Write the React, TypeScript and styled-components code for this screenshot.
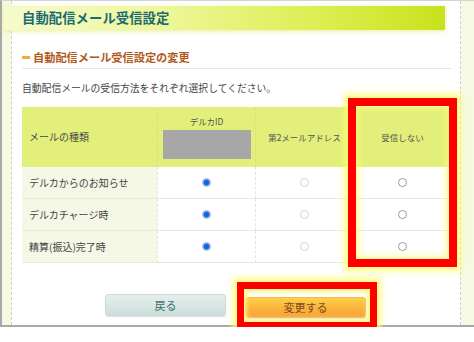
import React from "react";
import styled, { createGlobalStyle } from "styled-components";

const Global = createGlobalStyle`
  html, body { margin: 0; padding: 0; background: #ffffff; }
  body { font-family: "Noto Sans CJK JP", "Noto Sans", sans-serif; color: #444; }
  * { box-sizing: border-box; }
`;

const Frame = styled.div`
  width: 474px;
  height: 327px;
  background: #f7fae3;
  border-left: 2px solid #a9a9a9;
  border-top: 1px solid #d4d4d4;
  border-bottom: 2px solid #a9a9a9;
  display: flex;
`;

const Panel = styled.div`
  margin-left: 9px;
  width: 450px;
  height: 100%;
  background: #ffffff;
  border-left: 1px dashed #cfcfcf;
  border-right: 1px dashed #cfcfcf;
  display: flex;
  flex-direction: column;
`;

const TitleBar = styled.h1`
  margin: 5px 0 0 -8px;
  width: 441px;
  height: 24px;
  padding-left: 18px;
  background: linear-gradient(to right, #f5fbcc 0%, #eef79c 35%, #dcef55 70%, #c8e21c 100%);
  box-shadow: 0 1px 4px rgba(205, 225, 60, 0.55);
  color: #1c6a72;
  font-size: 13.3px;
  font-weight: 700;
  line-height: 24px;
  letter-spacing: 0.1px;
  white-space: nowrap;
`;

const Content = styled.div`
  padding: 0 9px 0 10px;
  display: flex;
  flex-direction: column;
  flex: 1;
`;

const SectionHeading = styled.h2`
  margin: 20px 0 0;
  padding-bottom: 4px;
  border-bottom: 1px solid #f3e4d2;
  display: flex;
  align-items: center;
  color: #b0581c;
  font-size: 11.2px;
  font-weight: 700;
  line-height: 14px;
  white-space: nowrap;
`;

const Bullet = styled.span`
  width: 8px;
  height: 3px;
  margin-right: 3px;
  background: #f6aa44;
`;

const Description = styled.p`
  margin: 12px 0 0;
  font-size: 9.8px;
  line-height: 14px;
  color: #454545;
  white-space: nowrap;
`;

const TableWrap = styled.div`
  position: relative;
  margin-top: 12px;
  width: 429px;
`;

const Grid = styled.div`
  display: grid;
  grid-template-columns: 135px 98px 98px 98px;
`;

const HeadCell = styled.div<{ $first?: boolean }>`
  height: 60px;
  background: #e2ef7b;
  display: flex;
  flex-direction: column;
  align-items: ${(p) => (p.$first ? "flex-start" : "center")};
  justify-content: center;
  padding-left: ${(p) => (p.$first ? "7px" : "0")};
  border-left: ${(p) => (p.$first ? "none" : "1px dashed #d6e27a")};
  color: ${(p) => (p.$first ? "#4a4a4a" : "#555")};
  font-size: ${(p) => (p.$first ? "10px" : "8.5px")};
  line-height: 12px;
  white-space: nowrap;
`;

const IdMask = styled.div`
  margin-top: 3px;
  width: 88px;
  height: 29px;
  background: #a7a7a7;
`;

const BodyCell = styled.div<{ $first?: boolean }>`
  height: 32px;
  display: flex;
  align-items: center;
  justify-content: ${(p) => (p.$first ? "flex-start" : "center")};
  padding-left: ${(p) => (p.$first ? "7px" : "0")};
  background: ${(p) => (p.$first ? "#f5f8e6" : "#ffffff")};
  border-bottom: 1px solid #e7eadc;
  border-left: ${(p) => (p.$first ? "none" : "1px dashed #e3e3e3")};
  font-size: 10px;
  color: #454545;
  white-space: nowrap;
`;

const Radio = styled.input.attrs({ type: "radio" })<{ $tone: "on" | "light" | "dark" }>`
  appearance: none;
  -webkit-appearance: none;
  margin: 0;
  width: 9px;
  height: 9px;
  border-radius: 50%;
  border: 1px solid
    ${(p) => (p.$tone === "on" ? "#8fb2e6" : p.$tone === "light" ? "#d3d3d3" : "#9c9c9c")};
  background: #ffffff;
  &:checked {
    background: radial-gradient(circle, #1663da 0, #1663da 2.4px, #4f8ce6 2.9px, #d9e6f8 3.6px);
  }
`;

const ColumnHighlight = styled.div`
  position: absolute;
  left: 326px;
  top: -9px;
  width: 109px;
  height: 169px;
  border: 8px solid #ff0000;
  pointer-events: none;
  box-shadow: 0 0 6px 4px rgba(255, 250, 110, 0.85), inset 0 0 6px 3px rgba(255, 250, 120, 0.75);
`;

const ButtonRow = styled.div`
  margin-top: 30px;
  display: flex;
  justify-content: center;
  align-items: flex-start;
  gap: 19px;
  padding-right: 2px;
`;

const Button = styled.button<{ $primary?: boolean }>`
  width: 121px;
  height: ${(p) => (p.$primary ? "21px" : "22px")};
  margin-top: ${(p) => (p.$primary ? "0" : "1px")};
  padding: 0;
  border-radius: 3px;
  border: 1px solid ${(p) => (p.$primary ? "#f3b84a" : "#cadbd8")};
  background: ${(p) =>
    p.$primary
      ? "linear-gradient(to bottom, #ffd04a 0%, #fbb23c 55%, #f8a23e 100%)"
      : "linear-gradient(to bottom, #e4efed 0%, #d6e6e3 60%, #cbdedb 100%)"};
  box-shadow: 0 1px 1px rgba(0, 0, 0, 0.12);
  color: ${(p) => (p.$primary ? "#7b4b22" : "#3f6f6d")};
  font-family: "Noto Sans CJK JP", sans-serif;
  font-size: 11px;
  line-height: 18px;
`;

const Highlighted = styled.div`
  position: relative;
  &::before {
    content: "";
    position: absolute;
    left: -8px;
    right: -11px;
    top: -11px;
    bottom: -10px;
    border: 7px solid #ff0000;
    border-bottom-width: 6px;
    pointer-events: none;
    box-shadow: 0 0 6px 4px rgba(255, 250, 110, 0.85), inset 0 0 4px 3px rgba(255, 245, 120, 0.9);
  }
`;

type Row = { label: string; name: string };
const rows: Row[] = [
  { label: "デルカからのお知らせ", name: "notice" },
  { label: "デルカチャージ時", name: "charge" },
  { label: "精算(振込)完了時", name: "settle" },
];

export default function App() {
  return (
    <>
      <Global />
      <Frame>
        <Panel>
          <TitleBar>自動配信メール受信設定</TitleBar>
          <Content>
            <SectionHeading>
              <Bullet />
              自動配信メール受信設定の変更
            </SectionHeading>
            <Description>自動配信メールの受信方法をそれぞれ選択してください。</Description>
            <TableWrap>
              <Grid>
                <HeadCell $first>メールの種類</HeadCell>
                <HeadCell>
                  デルカID
                  <IdMask />
                </HeadCell>
                <HeadCell>第2メールアドレス</HeadCell>
                <HeadCell>受信しない</HeadCell>
                {rows.map((r) => (
                  <React.Fragment key={r.name}>
                    <BodyCell $first>{r.label}</BodyCell>
                    <BodyCell>
                      <Radio $tone="on" name={r.name} defaultChecked />
                    </BodyCell>
                    <BodyCell>
                      <Radio $tone="light" name={r.name} />
                    </BodyCell>
                    <BodyCell>
                      <Radio $tone="dark" name={r.name} />
                    </BodyCell>
                  </React.Fragment>
                ))}
              </Grid>
              <ColumnHighlight />
            </TableWrap>
            <ButtonRow>
              <Button>戻る</Button>
              <Highlighted>
                <Button $primary>変更する</Button>
              </Highlighted>
            </ButtonRow>
          </Content>
        </Panel>
      </Frame>
    </>
  );
}
